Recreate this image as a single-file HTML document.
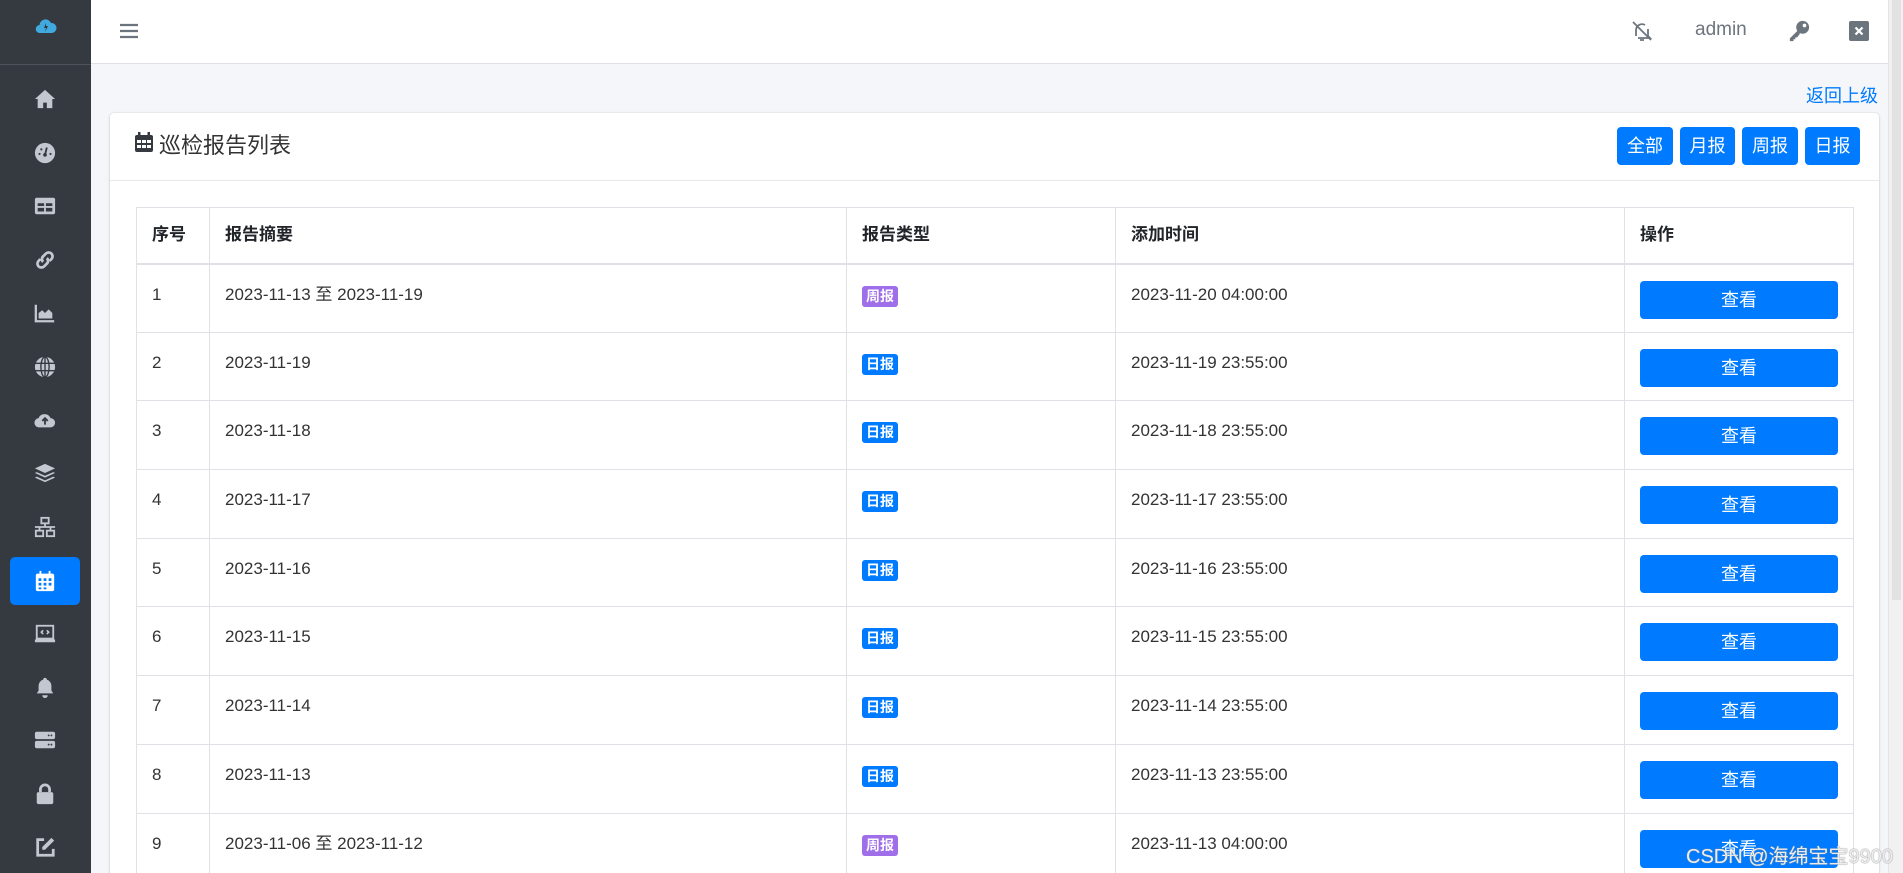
<!DOCTYPE html>
<html><head><meta charset="utf-8"><style>
*{margin:0;padding:0;box-sizing:border-box}
html{width:1903px;height:873px;overflow:hidden}
body{width:1903px;height:873px;overflow:hidden;background:#f4f6f9;font-family:"Liberation Sans","Noto Sans CJK SC",sans-serif;color:#212529;position:relative}
.side{position:absolute;left:0;top:0;width:91px;height:873px;background:#343a40}
.side .line{position:absolute;left:0;top:64px;width:91px;height:1px;background:#4b545c}
.ic{position:absolute;left:34px;width:22px;height:22px}
.act{position:absolute;left:10px;top:557px;width:70px;height:48px;background:#007bff;border-radius:5px}
.top{position:absolute;left:91px;top:0;right:15px;height:64px;background:#fff;border-bottom:1px solid #dee2e6}
.sb{position:absolute;right:0;top:0;width:15px;height:873px;background:#f1f1f1;border-left:1px solid #e5e5e5}
.sb div{position:absolute;left:3px;top:0;width:9px;height:600px;background:#e2e2e2}
.card{position:absolute;left:110px;top:113px;width:1769px;height:770px;background:#fff;border-radius:4px;box-shadow:0 0 1px rgba(0,0,0,.2),0 1px 3px rgba(0,0,0,.15);overflow:hidden}
.chead{position:absolute;left:0;top:0;width:100%;height:68px;border-bottom:1px solid #e6e8eb}
.btn{position:absolute;top:14px;height:38px;background:#007bff;color:#fff;border-radius:4px;font-size:18px;text-align:center;line-height:38px}
table{position:absolute;left:26px;top:94px;border-collapse:collapse;font-size:17px;line-height:22px}
td,th{border:1px solid #dee2e6;padding:0 15px;text-align:left;vertical-align:top}
th{height:56px;font-weight:bold;vertical-align:middle;border-bottom:2px solid #dee2e6}
td{height:68.7px;padding-top:19px;color:#333}
.bd{display:inline-block;color:#fff;font-size:14px;font-weight:bold;padding:0 4px;height:21px;line-height:21px;border-radius:3px;vertical-align:top;margin-top:2px}
.vw{display:block;width:198px;height:38px;background:#007bff;color:#fff;border-radius:4px;text-align:center;line-height:38px;font-size:18px;margin-top:-3px}
</style></head><body>
<div class="side">
<svg style="position:absolute;left:35px;top:17px" width="22" height="18" viewBox="0 0 22 18"><path d="M5 16a4 4 0 0 1-.5-8A6 6 0 0 1 16 6a5 5 0 0 1 1 10z" fill="#3fa9e0"/><path d="M11 6l-2 5h2l-1 4 3-6h-2z" fill="#343a40"/></svg>
<div class="line"></div>
<svg class="ic" style="top:88px" viewBox="0 0 24 24"><path d="M12 2L1 12h3v10h6v-6h4v6h6V12h3z" fill="#c2c7d0"/></svg>
<svg class="ic" style="top:142px" viewBox="0 0 24 24"><circle cx="12" cy="12" r="11" fill="#c2c7d0"/><circle cx="12" cy="14" r="2" fill="#343a40"/><path d="M12 14l2-8" stroke="#343a40" stroke-width="2"/><circle cx="6" cy="13" r="1.2" fill="#343a40"/><circle cx="8" cy="8" r="1.2" fill="#343a40"/><circle cx="18" cy="13" r="1.2" fill="#343a40"/></svg>
<svg class="ic" style="top:195px" viewBox="0 0 24 24"><rect x="1" y="3" width="22" height="18" rx="2" fill="#c2c7d0"/><path d="M4 9h7v3H4zM13 9h7v3h-7zM4 14h7v4H4zM13 14h7v4h-7z" fill="#343a40"/></svg>
<svg class="ic" style="top:249px" viewBox="0 0 24 24"><g fill="none" stroke="#c2c7d0" stroke-width="3"><path d="M10 14a4 4 0 0 1 0-6l3-3a4 4 0 0 1 6 6l-2 2"/><path d="M14 10a4 4 0 0 1 0 6l-3 3a4 4 0 0 1-6-6l2-2"/></g></svg>
<svg class="ic" style="top:302px" viewBox="0 0 24 24"><path d="M2 3v18h20" stroke="#c2c7d0" stroke-width="2.5" fill="none"/><path d="M5 18v-6l4-3 3 3 4-4 4 4v6z" fill="#c2c7d0"/></svg>
<svg class="ic" style="top:356px" viewBox="0 0 24 24"><circle cx="12" cy="12" r="11" fill="#c2c7d0"/><g stroke="#343a40" stroke-width="1.5" fill="none"><ellipse cx="12" cy="12" rx="4.5" ry="11"/><path d="M1 8h22M1 16h22M12 1v22"/></g></svg>
<svg class="ic" style="top:409px" viewBox="0 0 24 24"><path d="M6 20a5 5 0 0 1-1-10 7 7 0 0 1 13 0 5 5 0 0 1 0 10z" fill="#c2c7d0"/><path d="M12 17v-6M9 13l3-3 3 3" stroke="#343a40" stroke-width="2" fill="none"/></svg>
<svg class="ic" style="top:462px" viewBox="0 0 24 24"><path d="M12 2l11 5-11 5L1 7z" fill="#c2c7d0"/><path d="M3 11l9 4 9-4 2 1-11 5L1 12zM3 16l9 4 9-4 2 1-11 5L1 17z" fill="#c2c7d0"/></svg>
<svg class="ic" style="top:516px" viewBox="0 0 24 24"><g fill="none" stroke="#c2c7d0" stroke-width="2"><rect x="8" y="2" width="8" height="6"/><rect x="2" y="16" width="8" height="6"/><rect x="14" y="16" width="8" height="6"/><path d="M12 8v4M6 16v-4h12v4M1 12h22"/></g></svg>
<div class="act"></div>
<svg class="ic" style="top:570px" viewBox="0 0 24 24"><rect x="2" y="4" width="20" height="19" rx="2" fill="#fff"/><rect x="6" y="1" width="2" height="5" fill="#fff"/><rect x="16" y="1" width="2" height="5" fill="#fff"/><g fill="#007bff"><rect x="5" y="9" width="3" height="3"/><rect x="10.5" y="9" width="3" height="3"/><rect x="16" y="9" width="3" height="3"/><rect x="5" y="14" width="3" height="3"/><rect x="10.5" y="14" width="3" height="3"/><rect x="16" y="14" width="3" height="3"/><rect x="5" y="19" width="3" height="2"/><rect x="10.5" y="19" width="3" height="2"/></g></svg>
<svg class="ic" style="top:623px" viewBox="0 0 24 24"><rect x="3" y="3" width="18" height="14" fill="none" stroke="#c2c7d0" stroke-width="2"/><path d="M1 18h22v3H1z" fill="#c2c7d0"/><path d="M10 8l-2 2 2 2M14 8l2 2-2 2" stroke="#c2c7d0" stroke-width="1.8" fill="none"/></svg>
<svg class="ic" style="top:676px" viewBox="0 0 24 24"><path d="M12 2a2 2 0 0 1 2 2 7 7 0 0 1 5 7v5l2 3H3l2-3v-5a7 7 0 0 1 5-7 2 2 0 0 1 2-2zM9 21h6a3 3 0 0 1-6 0z" fill="#c2c7d0"/></svg>
<svg class="ic" style="top:729px" viewBox="0 0 24 24"><rect x="1" y="3" width="22" height="8" rx="2" fill="#c2c7d0"/><rect x="1" y="13" width="22" height="8" rx="2" fill="#c2c7d0"/><g fill="#343a40"><circle cx="16" cy="7" r="1"/><circle cx="19" cy="7" r="1"/><circle cx="16" cy="17" r="1"/><circle cx="19" cy="17" r="1"/></g></svg>
<svg class="ic" style="top:783px" viewBox="0 0 24 24"><path d="M7 10V7a5 5 0 0 1 10 0v3" stroke="#c2c7d0" stroke-width="3" fill="none"/><rect x="3" y="10" width="18" height="13" rx="2" fill="#c2c7d0"/></svg>
<svg class="ic" style="top:836px" viewBox="0 0 24 24"><path d="M11 4H4v17h17v-7" stroke="#c2c7d0" stroke-width="3" fill="none"/><path d="M19 2l3 3-10 10H9v-3z" fill="#c2c7d0"/></svg>
</div>
<div class="top">
<svg style="position:absolute;left:29px;top:23px" width="18" height="16" viewBox="0 0 18 16"><path d="M0 2h18M0 8h18M0 14h18" stroke="#6c757d" stroke-width="2.2"/></svg>
<svg style="position:absolute;left:1539px;top:19px" width="24" height="24" viewBox="0 0 24 24"><g fill="none" stroke="#6c757d" stroke-width="1.8"><path d="M6 17V11a6 6 0 0 1 9-5M18 10v7l2 2H8M10 21h4"/><path d="M3 3l18 18"/></g></svg>
<div style="position:absolute;left:1604px;top:19px;font-size:19px;color:#6c757d">admin</div>
<svg style="position:absolute;left:1697px;top:20px" width="22" height="22" viewBox="0 0 24 24"><circle cx="16" cy="8" r="7" fill="#6c757d"/><circle cx="18" cy="6" r="2" fill="#fff"/><path d="M11 11L2 20v3h4v-2h2v-2h2l3-4z" fill="#6c757d"/></svg>
<svg style="position:absolute;left:1758px;top:21px" width="20" height="20" viewBox="0 0 20 20"><rect width="20" height="20" rx="2" fill="#6c757d"/><path d="M6.5 6.5l7 7M13.5 6.5l-7 7" stroke="#fff" stroke-width="2.2"/></svg>
</div>
<div style="position:absolute;left:1806px;top:82px;font-size:18px;color:#007bff">返回上级</div>
<div class="card">
<div class="chead">
<svg style="position:absolute;left:25px;top:19px" width="18" height="20" viewBox="0 0 18 20"><rect x="0" y="3" width="18" height="17" rx="2" fill="#343a40"/><rect x="3" y="0" width="2.5" height="5" fill="#343a40"/><rect x="12.5" y="0" width="2.5" height="5" fill="#343a40"/><g fill="#fff"><rect x="2" y="8" width="4" height="3"/><rect x="7" y="8" width="4" height="3"/><rect x="12" y="8" width="4" height="3"/><rect x="2" y="13" width="4" height="3"/><rect x="7" y="13" width="4" height="3"/><rect x="12" y="13" width="4" height="3"/></g></svg>
<div style="position:absolute;left:49px;top:15px;font-size:22px;color:#333">巡检报告列表</div>
<div class="btn" style="left:1507px;width:56px">全部</div>
<div class="btn" style="left:1570px;width:55px">月报</div>
<div class="btn" style="left:1632px;width:56px">周报</div>
<div class="btn" style="left:1695px;width:55px">日报</div>
</div>
<table>
<tr><th style="width:73px">序号</th><th style="width:637px">报告摘要</th><th style="width:269px">报告类型</th><th style="width:509px">添加时间</th><th style="width:229px">操作</th></tr>
<tr><td>1</td><td>2023-11-13 至 2023-11-19</td><td><span class="bd" style="background:#9f6ee8">周报</span></td><td>2023-11-20 04:00:00</td><td><span class="vw">查看</span></td></tr>
<tr><td>2</td><td>2023-11-19</td><td><span class="bd" style="background:#007bff">日报</span></td><td>2023-11-19 23:55:00</td><td><span class="vw">查看</span></td></tr>
<tr><td>3</td><td>2023-11-18</td><td><span class="bd" style="background:#007bff">日报</span></td><td>2023-11-18 23:55:00</td><td><span class="vw">查看</span></td></tr>
<tr><td>4</td><td>2023-11-17</td><td><span class="bd" style="background:#007bff">日报</span></td><td>2023-11-17 23:55:00</td><td><span class="vw">查看</span></td></tr>
<tr><td>5</td><td>2023-11-16</td><td><span class="bd" style="background:#007bff">日报</span></td><td>2023-11-16 23:55:00</td><td><span class="vw">查看</span></td></tr>
<tr><td>6</td><td>2023-11-15</td><td><span class="bd" style="background:#007bff">日报</span></td><td>2023-11-15 23:55:00</td><td><span class="vw">查看</span></td></tr>
<tr><td>7</td><td>2023-11-14</td><td><span class="bd" style="background:#007bff">日报</span></td><td>2023-11-14 23:55:00</td><td><span class="vw">查看</span></td></tr>
<tr><td>8</td><td>2023-11-13</td><td><span class="bd" style="background:#007bff">日报</span></td><td>2023-11-13 23:55:00</td><td><span class="vw">查看</span></td></tr>
<tr><td>9</td><td>2023-11-06 至 2023-11-12</td><td><span class="bd" style="background:#9f6ee8">周报</span></td><td>2023-11-13 04:00:00</td><td><span class="vw">查看</span></td></tr>
</table>
</div>
<div class="sb"><div></div></div>
<div style="position:absolute;left:1686px;top:840px;font-size:20px;color:rgba(255,255,255,.85);text-shadow:0 0 1px #888,0 0 1px #888">CSDN @海绵宝宝9900</div>
</body></html>
